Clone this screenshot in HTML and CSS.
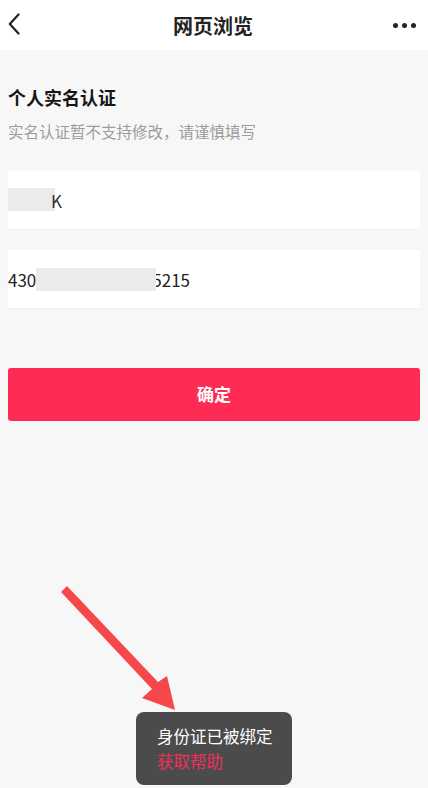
FILE: index.html
```html
<!DOCTYPE html>
<html lang="zh-CN">
<head>
    <meta charset="UTF-8">
    <meta name="viewport" content="width=device-width, initial-scale=1.0">
    <title>网页浏览</title>
    <link rel="stylesheet" href="styles.css">
</head>
<body>
    <div class="topbar">
        <span class="back">
            <svg width="12" height="22" viewBox="0 0 12 22"><path d="M10.5 1.5 L1.8 11 L10.5 20.5" fill="none" stroke="#222" stroke-width="2.2" stroke-linecap="round" stroke-linejoin="round"/></svg>
        </span>
        <span class="title">网页浏览</span>
        <span class="more"><i></i><i></i><i></i></span>
    </div>

    <div class="page">
        <h2 class="heading">个人实名认证</h2>
        <p class="hint">实名认证暂不支持修改，请谨慎填写</p>

        <div class="field">
            <span class="mask mask-name"></span><span class="tail-char">K</span>
        </div>
        <div class="field">
            <span>430</span><span class="mask mask-id"></span><span>5215</span>
        </div>

        <button class="submit">确定</button>
    </div>

    <svg class="arrow" width="428" height="788" viewBox="0 0 428 788">
        <path d="M61 592 L67 586 L158 682 L167 676 L175 710 L142 698 L152 689 Z" fill="#f5484a"/>
    </svg>

    <div class="toast">
        <div class="toast-msg">身份证已被绑定</div>
        <div class="toast-link">获取帮助</div>
    </div>
</body>
</html>
```

FILE: styles.css
```css
/* styles.css */
body {
    margin: 0;
    background-color: #f7f7f7;
    font-family: "Noto Sans CJK SC", "Noto Sans", sans-serif;
    color: #222;
    height: 788px;
    position: relative;
    overflow: hidden;
}

.topbar {
    height: 50px;
    background-color: #fff;
    display: flex;
    align-items: center;
    justify-content: space-between;
    padding: 0 12px 0 8px;
}

.back {
    display: flex;
    width: 40px;
    margin-top: -2px;
}

.title {
    font-size: 20px;
    font-weight: 700;
    color: #222;
    margin-left: 2px;
}

.more {
    display: flex;
    gap: 4px;
    width: 40px;
    justify-content: flex-end;
}

.more i {
    display: block;
    width: 5px;
    height: 5px;
    border-radius: 50%;
    background-color: #222;
}

.page {
    padding: 34px 8px 0;
}

.heading {
    margin: 0;
    font-size: 18px;
    line-height: 26px;
    font-weight: 700;
    color: #161616;
}

.hint {
    margin: 10px 0 0;
    font-size: 15.5px;
    line-height: 22px;
    color: #9c9c9c;
}

.field {
    height: 59px;
    background-color: #fff;
    margin-top: 29px;
    display: flex;
    align-items: center;
    font-size: 17px;
    color: #222;
    border-bottom: 1px solid #f0f0f0;
    box-sizing: border-box;
}

.field + .field {
    margin-top: 20px;
}

.mask {
    display: inline-block;
    height: 23px;
    background-color: #ebebeb;
}

.mask-name {
    width: 47px;
    margin-top: -2px;
}

.tail-char {
    font-size: 17px;
    color: #333;
    margin-left: -4px;
}

.mask-id {
    width: 120px;
    margin-right: -4px;
    position: relative;
}

.submit {
    display: block;
    width: 100%;
    height: 53px;
    margin-top: 59px;
    padding-bottom: 4px;
    border: none;
    border-radius: 3px;
    background-color: #fe2c55;
    color: #fff;
    font-family: inherit;
    font-size: 17px;
    font-weight: 700;
}

.arrow {
    position: absolute;
    left: 0;
    top: 0;
    pointer-events: none;
}

.toast {
    position: absolute;
    left: 136px;
    top: 712px;
    width: 156px;
    height: 73px;
    box-sizing: border-box;
    padding: 12px 0 0 21px;
    background-color: #4b4b4b;
    border-radius: 8px;
    font-size: 16.5px;
    line-height: 25px;
}

.toast-msg {
    color: #fff;
}

.toast-link {
    color: #f0305a;
}
```
